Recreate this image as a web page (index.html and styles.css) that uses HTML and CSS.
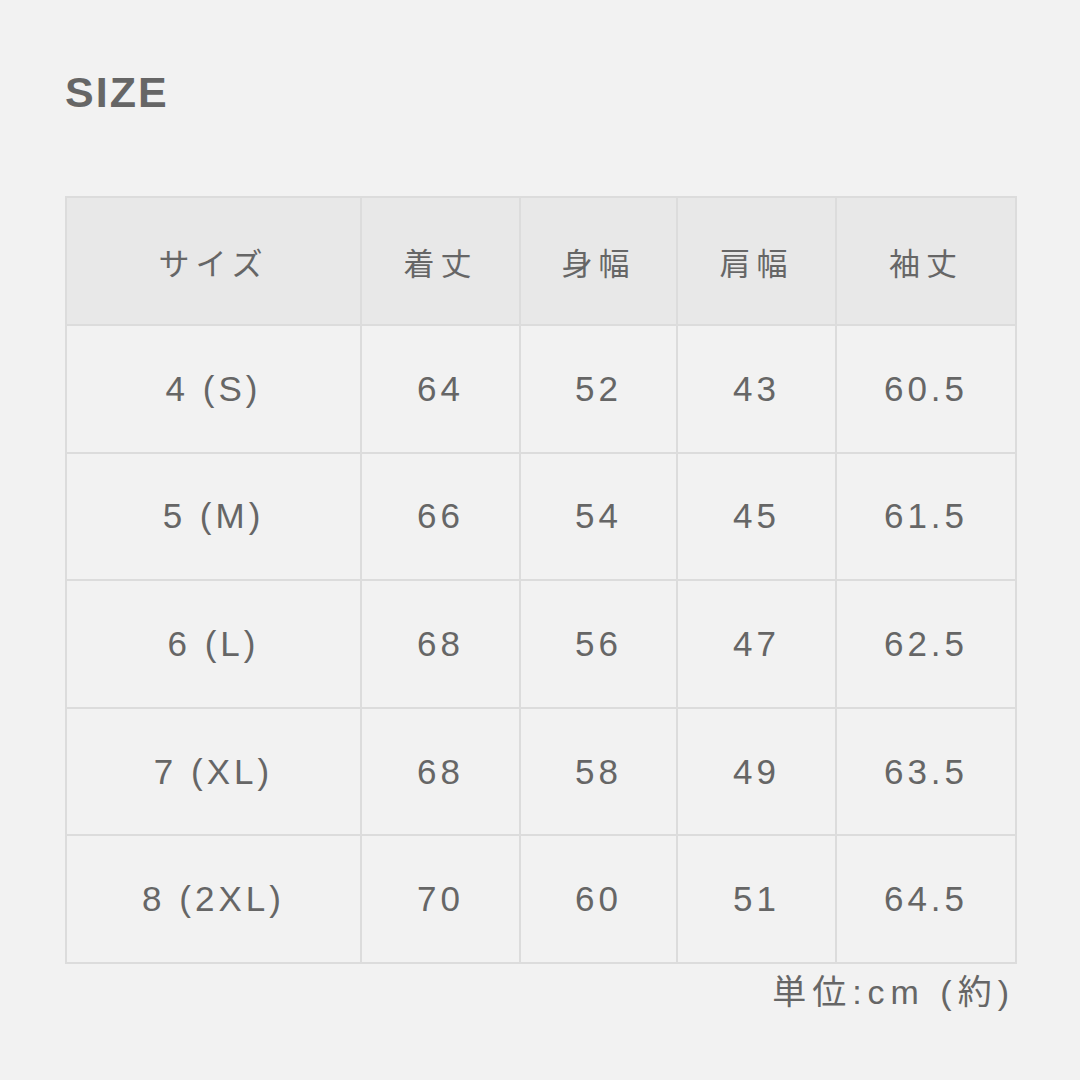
FILE: index.html
```html
<!DOCTYPE html>
<html lang="ja">
<head>
<meta charset="utf-8">
<link rel="stylesheet" href="styles.css">
</head>
<body>
<main class="page">
  <h1 class="title">SIZE</h1>
  <table class="size-table">
    <colgroup>
      <col class="c1"><col class="c2"><col class="c3"><col class="c4"><col class="c5">
    </colgroup>
    <thead>
      <tr><th>サイズ</th><th>着丈</th><th>身幅</th><th>肩幅</th><th>袖丈</th></tr>
    </thead>
    <tbody>
      <tr><td>4 (S)</td><td>64</td><td>52</td><td>43</td><td>60.5</td></tr>
      <tr><td>5 (M)</td><td>66</td><td>54</td><td>45</td><td>61.5</td></tr>
      <tr><td>6 (L)</td><td>68</td><td>56</td><td>47</td><td>62.5</td></tr>
      <tr><td>7 (XL)</td><td>68</td><td>58</td><td>49</td><td>63.5</td></tr>
      <tr><td>8 (2XL)</td><td>70</td><td>60</td><td>51</td><td>64.5</td></tr>
    </tbody>
  </table>
  <p class="unit">単位:cm (約)</p>
</main>
</body>
</html>
```

FILE: styles.css
```css
html, body {
  margin: 0;
  padding: 0;
  background: #f2f2f2;
}
.page {
  width: 1080px;
  height: 1080px;
  box-sizing: border-box;
  padding: 68px 65px 0 65px;
  font-family: "Liberation Sans", "Noto Sans CJK JP", sans-serif;
  color: #666666;
}
.title {
  margin: 0;
  font-size: 43px;
  line-height: 48px;
  font-weight: 700;
  letter-spacing: 2px;
  color: #666666;
}
.size-table {
  margin-top: 80px;
  width: 950px;
  border-collapse: collapse;
  table-layout: fixed;
  border: 2px solid #dcdcdc;
}
.c1 { width: 295px; }
.c2 { width: 159px; }
.c3 { width: 157px; }
.c4 { width: 159px; }
.c5 { width: 180px; }
.size-table th,
.size-table td {
  border: 2px solid #dcdcdc;
  height: 125.6px;
  padding: 0;
  text-align: center;
  vertical-align: middle;
}
.size-table th {
  height: 126px;
  background: #e8e8e8;
  font-family: "Noto Sans CJK JP", sans-serif;
  font-weight: 400;
  font-size: 31px;
  letter-spacing: 6px;
}
.size-table td {
  font-size: 35px;
  letter-spacing: 4px;
}
.unit {
  margin: 6px 0 0 0;
  text-align: right;
  font-family: "Liberation Sans", "Noto Sans CJK JP", sans-serif;
  font-size: 34px;
  letter-spacing: 6px;
  line-height: 44px;
}
```
